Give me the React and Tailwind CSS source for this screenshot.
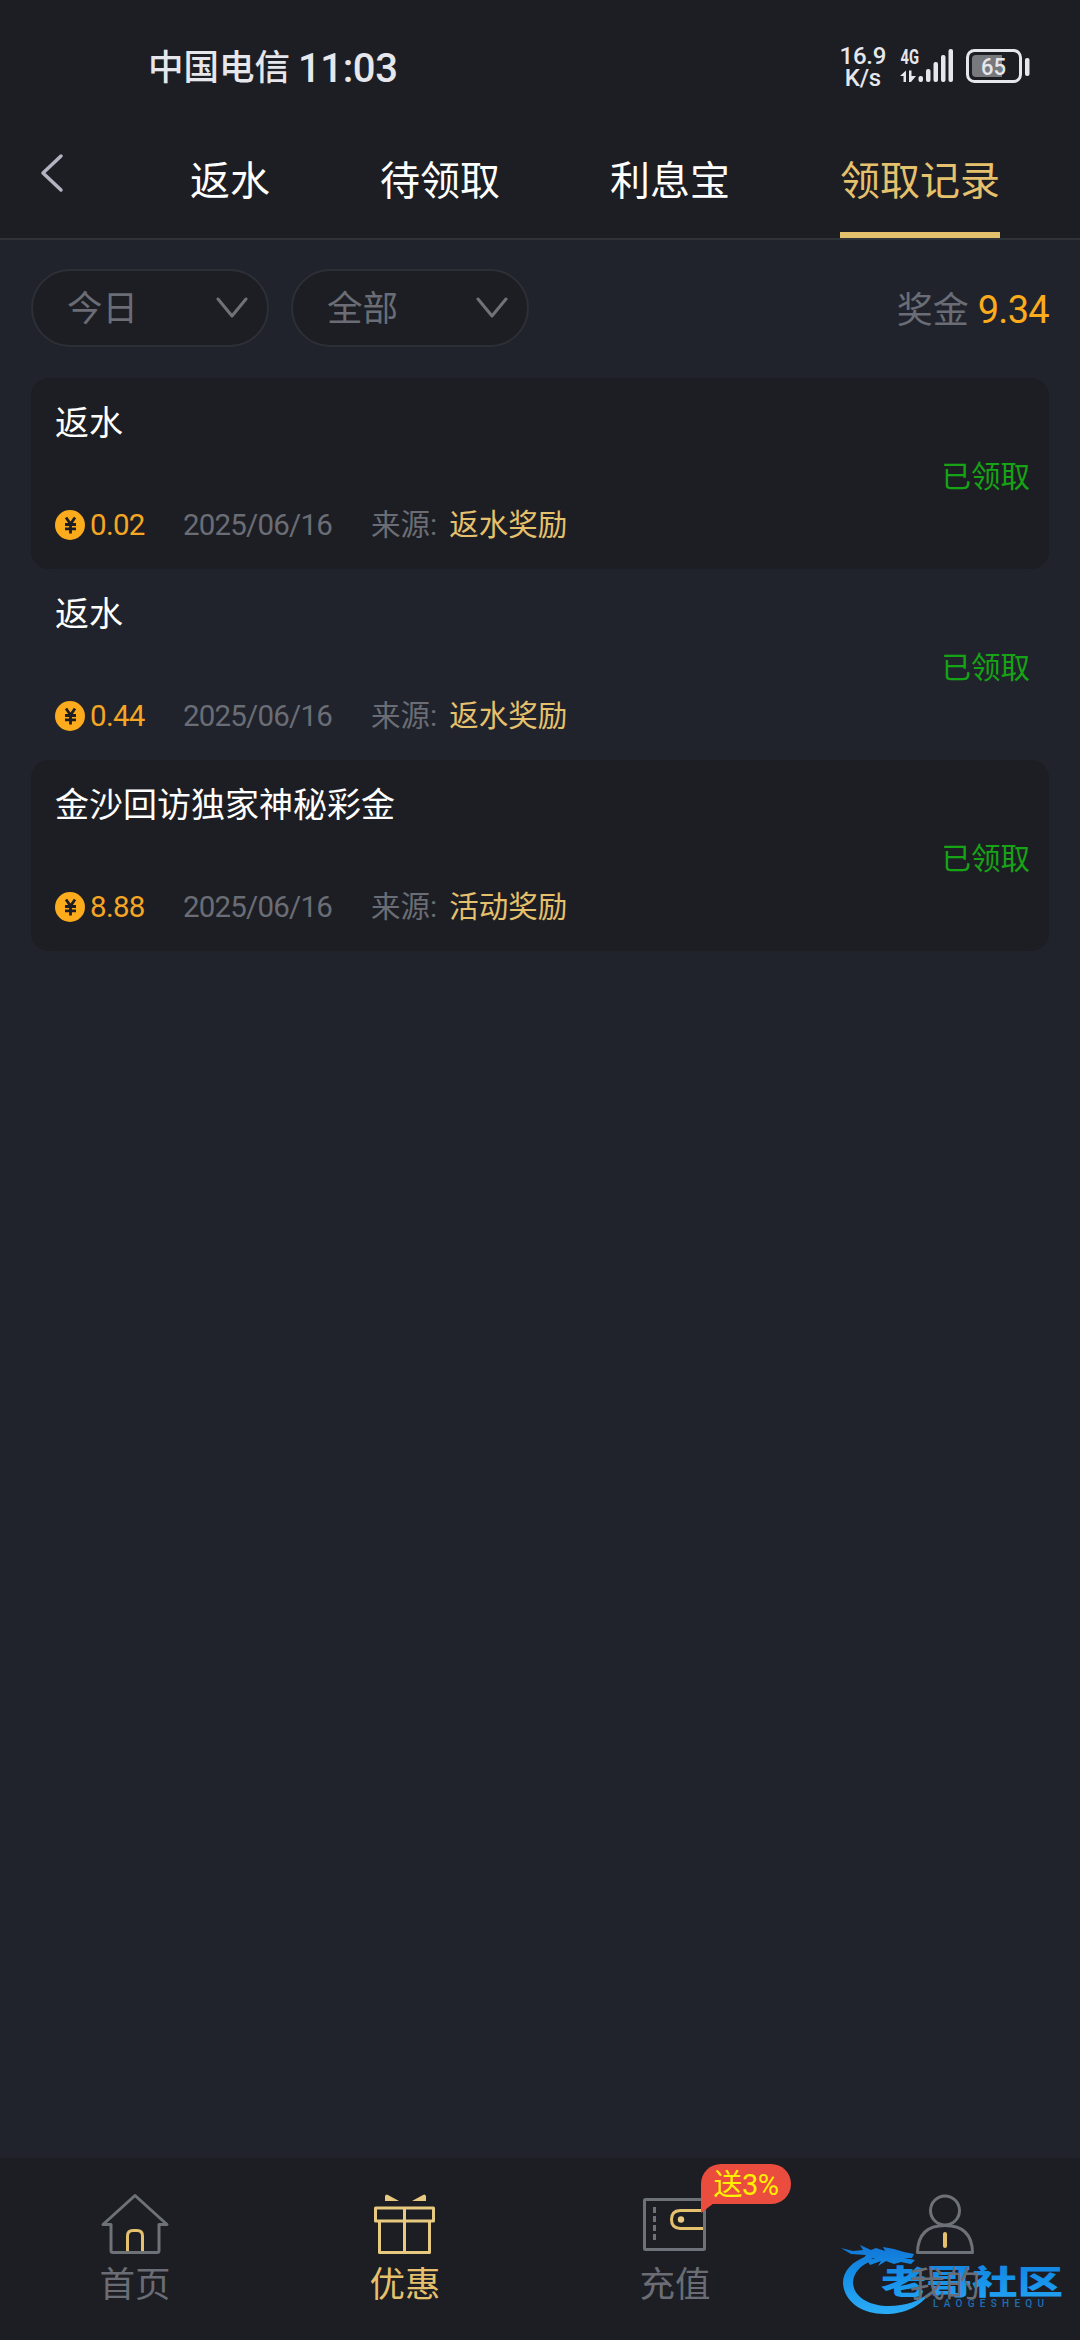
const font = "font-['Roboto','Noto_Sans_CJK_SC',sans-serif]";

const tabs = ['返水', '待领取', '利息宝', '领取记录'];

const records = [
  { title: '返水', amount: '0.02', source: '返水奖励', filled: true },
  { title: '返水', amount: '0.44', source: '返水奖励', filled: false },
  { title: '金沙回访独家神秘彩金', amount: '8.88', source: '活动奖励', filled: true },
];

function StatusBar() {
  return (
    <div className="flex h-[132px] items-center justify-between pl-[148px] pr-[50px] text-[#e6e7ec]">
      <div className="flex items-center gap-[8px] pt-[5px] font-medium leading-none">
        <span className="text-[35.500px]">中国电信</span>
        <span className="text-[40px] tracking-[-0.4px]">11:03</span>
      </div>
      <div className="flex items-center">
        <div className="flex flex-col items-center pt-[2px] text-[24px] leading-[23px] tracking-[-0.3px]">
          <span className="h-[22px] font-medium">16.9</span>
          <span className="font-medium">K/s</span>
        </div>
        <div className="ml-[14px] flex h-[36px] w-[54px]">
          <svg width="54" height="36" viewBox="0 0 54 36" className="overflow-visible" fill="#e6e7ec">
            <text x="0.500" y="15.500" fontSize="21" fontWeight="700" textLength="18.500" lengthAdjust="spacingAndGlyphs">4G</text>
            <path d="M0 28 6 22.500V34H3.500V28ZM9 22.500h2.500V28H16l-5 6H9Z" />
            <rect x="18.500" y="28" width="4.500" height="6" rx="2" />
            <rect x="26" y="21" width="4.500" height="13" rx="2" />
            <rect x="33.500" y="14" width="4.500" height="20" rx="2" />
            <rect x="41" y="7" width="4.500" height="27" rx="2" />
            <rect x="48.500" y="1" width="4.500" height="33" rx="2" />
          </svg>
        </div>
        <svg width="64" height="34" viewBox="0 0 64 34" className="ml-[12px]">
          <rect x="1.500" y="1.500" width="53" height="31" rx="7" fill="none" stroke="#e6e7ec" strokeWidth="3" />
          <path d="M10 6H36V28H10Q6 28 6 24V10Q6 6 10 6Z" fill="#77797d" />
          <rect x="59" y="9" width="4.500" height="18" rx="2" fill="#e6e7ec" />
          <text x="27.500" y="26" textAnchor="middle" fontSize="24" fontWeight="500" textLength="25" lengthAdjust="spacingAndGlyphs" fill="#e6e7ec">65</text>
        </svg>
      </div>
    </div>
  );
}

function TabBar() {
  return (
    <div className="flex h-[108px] border-b-2 border-[#2f3237] pl-[39px]">
      <svg width="26" height="40" viewBox="0 0 26 40" className="mt-[21px]" fill="none" stroke="#b2b5c1" strokeWidth="3.500" strokeLinecap="round" strokeLinejoin="round">
        <path d="M22 3 4 20 22 37" />
      </svg>
      <div className="ml-[125px] flex gap-[110px] text-[40px] leading-[60px] text-white">
        {tabs.map((t, i) => (
          <div key={t} className={i === 3 ? 'border-b-[6px] border-[#e6c16d] pt-[20px] text-[#e6c16d]' : 'pt-[20px]'}>{t}</div>
        ))}
      </div>
    </div>
  );
}

function Select({ label }) {
  return (
    <div className="flex h-[78px] w-[238px] items-center justify-between rounded-full border-2 border-[#2c3036] bg-[#1d1e23] pl-[34px] pr-[19px] text-[35.500px] text-[#6a6d75]">
      <span className="pt-[3px] leading-none">{label}</span>
      <svg width="32" height="22" viewBox="0 0 32 22" fill="none" stroke="#6f7279" strokeWidth="3" strokeLinecap="round" strokeLinejoin="round">
        <path d="M2 2 16 19 30 2" />
      </svg>
    </div>
  );
}

function Coin() {
  return (
    <svg width="30" height="30" viewBox="0 0 30 30">
      <circle cx="15" cy="15" r="15" fill="#fbab1c" />
      <path d="M11 7.500 15.500 14 20 7.500M10 14.500H21M10 18.800H21M15.500 14V23.500" fill="none" stroke="#1d1e23" strokeWidth="2.800" />
    </svg>
  );
}

function Record({ title, amount, source, filled }) {
  return (
    <div className={filled ? 'flex h-[191px] items-center justify-between rounded-[18px] bg-[#1d1e23] pl-[24px] pr-[19px]' : 'flex h-[191px] items-center justify-between pl-[24px] pr-[19px]'}>
      <div className="flex h-full flex-col justify-between pt-[21px] pb-[22px]">
        <div className="text-[34px] leading-[48px] text-white">{title}</div>
        <div className="flex items-center leading-[44px]">
          <Coin />
          <span className="ml-[5px] w-[93px] pt-px text-[29.500px] tracking-[-0.7px] text-[#f5a623]">{amount}</span>
          <span className="w-[188px] pt-px text-[29.500px] tracking-[-0.8px] text-[#6a6d75]">2025/06/16</span>
          <span className="text-[29.500px] text-[#6a6d75]">来源:</span>
          <span className="ml-[12px] text-[29.500px] text-[#e6c16d]">{source}</span>
        </div>
      </div>
      <div className="pt-[7px] text-[29.500px] text-[#16a316]">已领取</div>
    </div>
  );
}

function HomeIcon() {
  return (
    <svg width="70" height="64" viewBox="0 0 70 64" fill="none" stroke="#6d7178" strokeWidth="3" strokeLinejoin="round">
      <path d="M35 3.500 67 32.500H59V58.500Q59 60.500 57 60.500H13Q11 60.500 11 58.500V32.500H3Z" />
      <path d="M27.500 59V44Q27.500 38.500 33 38.500H37Q42.500 38.500 42.500 44V59" stroke="#e6c16d" />
    </svg>
  );
}

function GiftIcon() {
  return (
    <svg width="70" height="64" viewBox="0 0 70 64" fill="none" stroke="#e8c980" strokeWidth="3" strokeLinejoin="round">
      <rect x="5.500" y="16" width="58" height="13" />
      <path d="M9.500 29V60.500H59.500V29M34.500 16V60" />
      <path d="M15 9V4Q16 1.500 18 3L29 9H15ZM56 9V4Q55 1.500 53 3L42 9H56Z" fill="#e8c980" stroke="none" />
    </svg>
  );
}

function WalletIcon() {
  return (
    <svg width="70" height="64" viewBox="0 0 70 64" fill="none" stroke="#6d7178" strokeWidth="3" strokeLinejoin="round">
      <rect x="4.500" y="7.500" width="60" height="50" rx="1" />
      <path d="M14.500 15V49" strokeDasharray="6 3" />
      <path d="M63 18.500H40Q31.500 19 31.500 27.500T40 36.500H63" stroke="#e6c16d" />
      <circle cx="41" cy="27.500" r="3.200" fill="#e8c980" stroke="none" />
    </svg>
  );
}

function UserIcon() {
  return (
    <svg width="70" height="64" viewBox="0 0 70 64" fill="none" stroke="#6d7178" strokeWidth="3" strokeLinejoin="round">
      <circle cx="35" cy="18.500" r="14.500" />
      <path d="M7.500 60.500Q8 33.500 35 33.500T62.500 60.500Z" />
      <path d="M35 42V54" stroke="#e6c16d" strokeWidth="4" strokeLinecap="round" />
    </svg>
  );
}

function Watermark() {
  return (
    <svg width="228" height="80" viewBox="0 0 228 80" className="absolute left-[838px] top-[82px]">
      <defs>
        <linearGradient id="blue" x1="0" y1="5" x2="0" y2="75" gradientUnits="userSpaceOnUse">
          <stop offset="0" stopColor="#1277d6" />
          <stop offset="0.450" stopColor="#158fe8" />
          <stop offset="1" stopColor="#2badf7" />
        </linearGradient>
      </defs>
      <g fill="url(#blue)">
        <path d="M30 16C14 21 5 31 5 43C6 61 23 74 47 74C67 74 84 66 92 52C82 61 67 66 51 66C31 66 16 57 15 43C15 33 22 25 36 20Z" />
        <path d="M3 8 15 11 25 10 22 5 33 10 38 8 47 11 45 7 56 9 66 12 76 14 74 18 66 18 77 20 73 24 63 22 56 24 48 21 40 26 43 21 32 25 30 22 37 18 25 19 28 15 13 14Z" />
        <text x="43" y="54" fontSize="33" fontWeight="900" textLength="182" lengthAdjust="spacingAndGlyphs">老哥社区</text>
      </g>
      <text x="95" y="67" fontSize="10" fontWeight="500" fill="#1c6fb5" textLength="111" lengthAdjust="spacing">LAOGESHEQU</text>
    </svg>
  );
}

function BottomNav() {
  const items = [
    { label: '首页', Icon: HomeIcon },
    { label: '优惠', Icon: GiftIcon },
    { label: '充值', Icon: WalletIcon },
    { label: '我的', Icon: UserIcon },
  ];
  return (
    <div className="relative grid h-[182px] grid-cols-4 bg-[#1d1e23]">
      <Watermark />
      {items.map(({ label, Icon }, i) => (
        <div key={label} className="relative flex flex-col items-center pt-[34px]">
          <Icon />
          <span className={i === 1 ? 'mt-[3px] text-[35.500px] leading-[52px] text-[#e6c16d]' : 'mt-[3px] text-[35.500px] leading-[52px] text-[#6a6d75]'}>{label}</span>
          {i === 2 && (
            <div className="absolute left-[161px] top-[6px] h-[40px] w-[90px] rounded-[20px] rounded-bl-none bg-[#ea4c3e] text-center text-[29px] leading-[42px] tracking-[-0.5px] text-[#fff000]">
              送3%
              <svg width="14" height="10" viewBox="0 0 14 10" className="absolute left-0 top-[39px]">
                <path d="M0 0H13L0 10Z" fill="#ea4c3e" />
              </svg>
            </div>
          )}
        </div>
      ))}
    </div>
  );
}

export default function App() {
  return (
    <div className={`flex h-[2340px] w-[1080px] flex-col overflow-hidden bg-[#20232b] ${font}`}>
      <div className="bg-[#1d1e23]">
        <StatusBar />
        <TabBar />
      </div>
      <div className="flex-1 px-[31px] pt-[29px]">
        <div className="flex items-center gap-[22px]">
          <Select label="今日" />
          <Select label="全部" />
          <div className="ml-auto pt-[4px] text-[36px] leading-[54px] text-[#6a6d75]">
            奖金<span className="ml-[9px] text-[38px] tracking-[-0.7px] text-[#fbab1c]">9.34</span>
          </div>
        </div>
        <div className="mt-[31px]">
          {records.map((r) => (
            <Record key={r.title + r.amount} {...r} />
          ))}
        </div>
      </div>
      <BottomNav />
    </div>
  );
}
